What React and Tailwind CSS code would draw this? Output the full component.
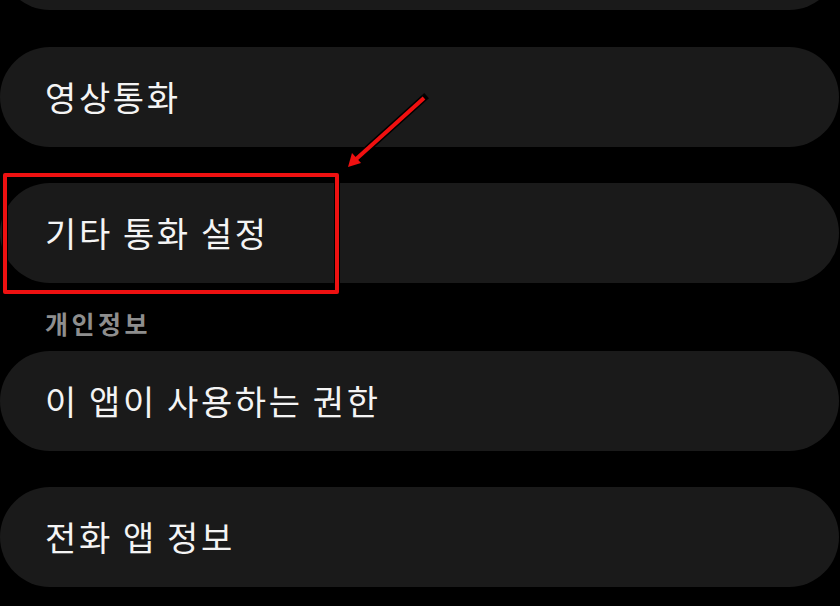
const rows = [
    { label: "", id: "top" },
    { label: "영상통화", id: "video" },
    { label: "기타 통화 설정", id: "etc" },
];

const privacyRows = [
    { label: "이 앱이 사용하는 권한", id: "perm" },
    { label: "전화 앱 정보", id: "info" },
];

const Row = ({ label }) => (
    <div className="h-[100px] w-[839px] shrink-0 rounded-full bg-[#1a1a1a] flex items-center pl-[45px]">
        <span className="text-[34px] leading-none text-[#f4f4f4] tracking-[2.6px]">{label}</span>
    </div>
);

const App = () => {
    return (
        <div
            className="relative w-[840px] h-[606px] overflow-hidden bg-black"
            style={{ fontFamily: '"Noto Sans CJK KR", "Noto Sans", sans-serif' }}
        >
            <div className="flex flex-col mt-[-90px]">
                <div className="mb-[37px]">
                    <Row label={rows[0].label} />
                </div>
                <div className="mb-[36px]">
                    <Row label={rows[1].label} />
                </div>
                <Row label={rows[2].label} />

                <div className="h-[68px] pt-[28px] pl-[45px]">
                    <span className="text-[25px] leading-[25px] font-semibold tracking-[3.5px] text-[#8e8e8e]">개인정보</span>
                </div>

                <div className="mb-[36px]">
                    <Row label={privacyRows[0].label} />
                </div>
                <Row label={privacyRows[1].label} />
            </div>

            {/* annotation: highlight box */}
            <div className="absolute left-[3px] top-[173px] w-[336px] h-[121px] border-4 border-[#ee1111] rounded-[2px] shadow-[0_0_0_1px_#000,inset_0_0_0_1px_#000]"></div>

            {/* annotation: arrow */}
            <svg className="absolute left-0 top-0" width="840" height="606" viewBox="0 0 840 606">
                <line x1="424" y1="98" x2="354" y2="161" stroke="#000" strokeWidth="7" strokeLinecap="square" />
                <polygon points="347,168 351,151 363,164" fill="#000" stroke="#000" strokeWidth="2" strokeLinejoin="round" />
                <line x1="424" y1="98" x2="354" y2="161" stroke="#f01010" strokeWidth="4" strokeLinecap="butt" />
                <polygon points="348,167 352,153 361,163" fill="#f01010" />
            </svg>
        </div>
    );
};

export default App;
